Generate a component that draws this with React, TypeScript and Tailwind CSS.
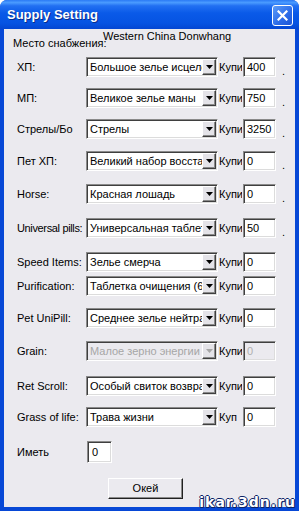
const rows = [
  { label: "ХП:", item: "Большое зелье исцеления", qty: "400", dot: true, mt: "mt-[7px]" },
  { label: "МП:", item: "Великое зелье маны", qty: "750", dot: true, mt: "mt-[11px]" },
  { label: "Стрелы/Бо", item: "Стрелы", qty: "3250", dot: true, mt: "mt-[11px]" },
  { label: "Пет ХП:", item: "Великий набор восстановления", qty: "0", dot: true, mt: "mt-[12px]" },
  { label: "Horse:", item: "Красная лошадь", qty: "0", dot: true, mt: "mt-[13px]" },
  { label: "Universal pills:", item: "Универсальная таблетка", qty: "50", dot: true, mt: "mt-[14px]", tight: true },
  { label: "Speed Items:", item: "Зелье смерча", qty: "0", dot: false, mt: "mt-[14px]" },
  { label: "Purification:", item: "Таблетка очищения (6 ур.)", qty: "0", dot: false, mt: "mt-[4px]" },
  { label: "Pet UniPill:", item: "Среднее зелье нейтрализации", qty: "0", dot: false, mt: "mt-[12px]" },
  { label: "Grain:", item: "Малое зерно энергии", qty: "0", dot: false, mt: "mt-[13px]", disabled: true },
  { label: "Ret Scroll:", item: "Особый свиток возврата", qty: "0", dot: false, mt: "mt-[15px]" },
  { label: "Grass of life:", item: "Трава жизни", qty: "0", dot: false, mt: "mt-[11px]", short: true },
]

const sunken =
  "border border-t-[#8a8a8a] border-l-[#8a8a8a] border-r-white border-b-white shadow-[inset_1px_1px_0_#3f3f3f,inset_-1px_-1px_0_#dcdcdc]"

function Combo({ item, disabled }: { item: string; disabled?: boolean }) {
  return (
    <div className={`flex h-[20px] w-[132px] p-[1px] ${sunken} ${disabled ? "bg-[#ebeaef] text-[#a6a6a6]" : "bg-white"}`}>
      <div className="flex-1 overflow-hidden whitespace-nowrap pl-[2px] leading-[16px]">{item}</div>
      <div className="flex h-[16px] w-[14px] items-center justify-center border border-t-white border-l-white border-r-[#3f3f3f] border-b-[#3f3f3f] bg-[#e4e3e8] shadow-[inset_-1px_-1px_0_#8a8a8a]">
        <svg width="7" height="4" viewBox="0 0 7 4">
          <path d="M0 0h7L3.5 4z" fill={disabled ? "#a6a6a6" : "#000"} />
        </svg>
      </div>
    </div>
  )
}

export default function App() {
  return (
    <div
      className="relative flex h-[511px] w-[299px] flex-col overflow-hidden rounded-t-[7px] bg-[#0748d6] text-[11px] text-black"
      style={{ fontFamily: '"Liberation Sans", Arial, sans-serif' }}
    >
      {/* title bar */}
      <div className="flex h-[29px] shrink-0 items-center justify-between bg-[linear-gradient(to_bottom,#2b7af5_0%,#4a9bff_9%,#2270f2_20%,#0a5ae8_45%,#0653e2_80%,#0446d2_100%)] pl-[7px] pr-[6px]">
        <span className="mt-[1px] text-[13px] font-bold text-white [text-shadow:1px_1px_0_#0a2d8a]">
          Supply Setting
        </span>
        <div className="mt-[2px] flex h-[21px] w-[21px] items-center justify-center rounded-[3px] border border-white bg-[linear-gradient(135deg,#5c9cf8,#2a6ae8_60%,#1c55d6)]">
          <svg width="11" height="11" viewBox="0 0 11 11">
            <path d="M1.5 1.5l8 8M9.5 1.5l-8 8" stroke="#fff" strokeWidth="2.2" strokeLinecap="square" />
          </svg>
        </div>
      </div>

      {/* body */}
      <div className="mx-[4px] mb-[4px] flex flex-1 flex-col bg-[#ebeaef]">
        <div className="flex pl-[9px]">
          <span className="mt-[8px] w-[90px] whitespace-nowrap leading-[13px]">Место снабжения:</span>
          <span className="mt-[1px] whitespace-nowrap leading-[13px]">Western China Donwhang</span>
        </div>

        {rows.map((r) => (
          <div key={r.label} className={`flex h-[20px] items-center pl-[13px] ${r.mt}`}>
            <span className={`w-[69px] whitespace-nowrap ${r.tight ? "tracking-[-0.35px]" : ""}`}>{r.label}</span>
            <Combo item={r.item} disabled={r.disabled} />
            <span className={`overflow-hidden whitespace-nowrap pl-[1px] ${r.short ? "mr-[6px] w-[19px]" : "mr-[1px] w-[24px]"}`}>
              {r.short ? "Куп" : "Купи"}
            </span>
            <div className={`h-[20px] w-[33px] p-[1px] pl-[3px] leading-[16px] ${sunken} ${r.disabled ? "bg-[#ebeaef] text-[#b0b0b0]" : "bg-white"}`}>
              {r.qty}
            </div>
            {r.dot && <span className="ml-[6px] mt-[8px]">.</span>}
          </div>
        ))}

        <div className="mt-[14px] flex h-[22px] items-center pl-[13px]">
          <span className="w-[70px]">Иметь</span>
          <div className={`h-[22px] w-[25px] bg-white p-[1px] pl-[4px] leading-[18px] ${sunken}`}>0</div>
        </div>

        <div className="mt-[15px] pl-[104px]">
          <button className="h-[21px] w-[75px] border border-t-white border-l-white border-r-[#202020] border-b-[#202020] bg-[#ebeaef] leading-[17px] shadow-[inset_-1px_-1px_0_#8a8a8a]">
            Окей
          </button>
        </div>
      </div>

      {/* watermark */}
      <span
        className="absolute bottom-[1px] right-[3px] text-[14px] font-bold leading-[15px] tracking-[1px] text-white [text-shadow:1px_0_0_#0b2366,-1px_0_0_#0b2366,0_1px_0_#0b2366,0_-1px_0_#0b2366,1px_1px_0_#0b2366]"
        style={{ fontFamily: '"DejaVu Sans", sans-serif' }}
      >
        ikar.3dn.ru
      </span>
    </div>
  )
}
